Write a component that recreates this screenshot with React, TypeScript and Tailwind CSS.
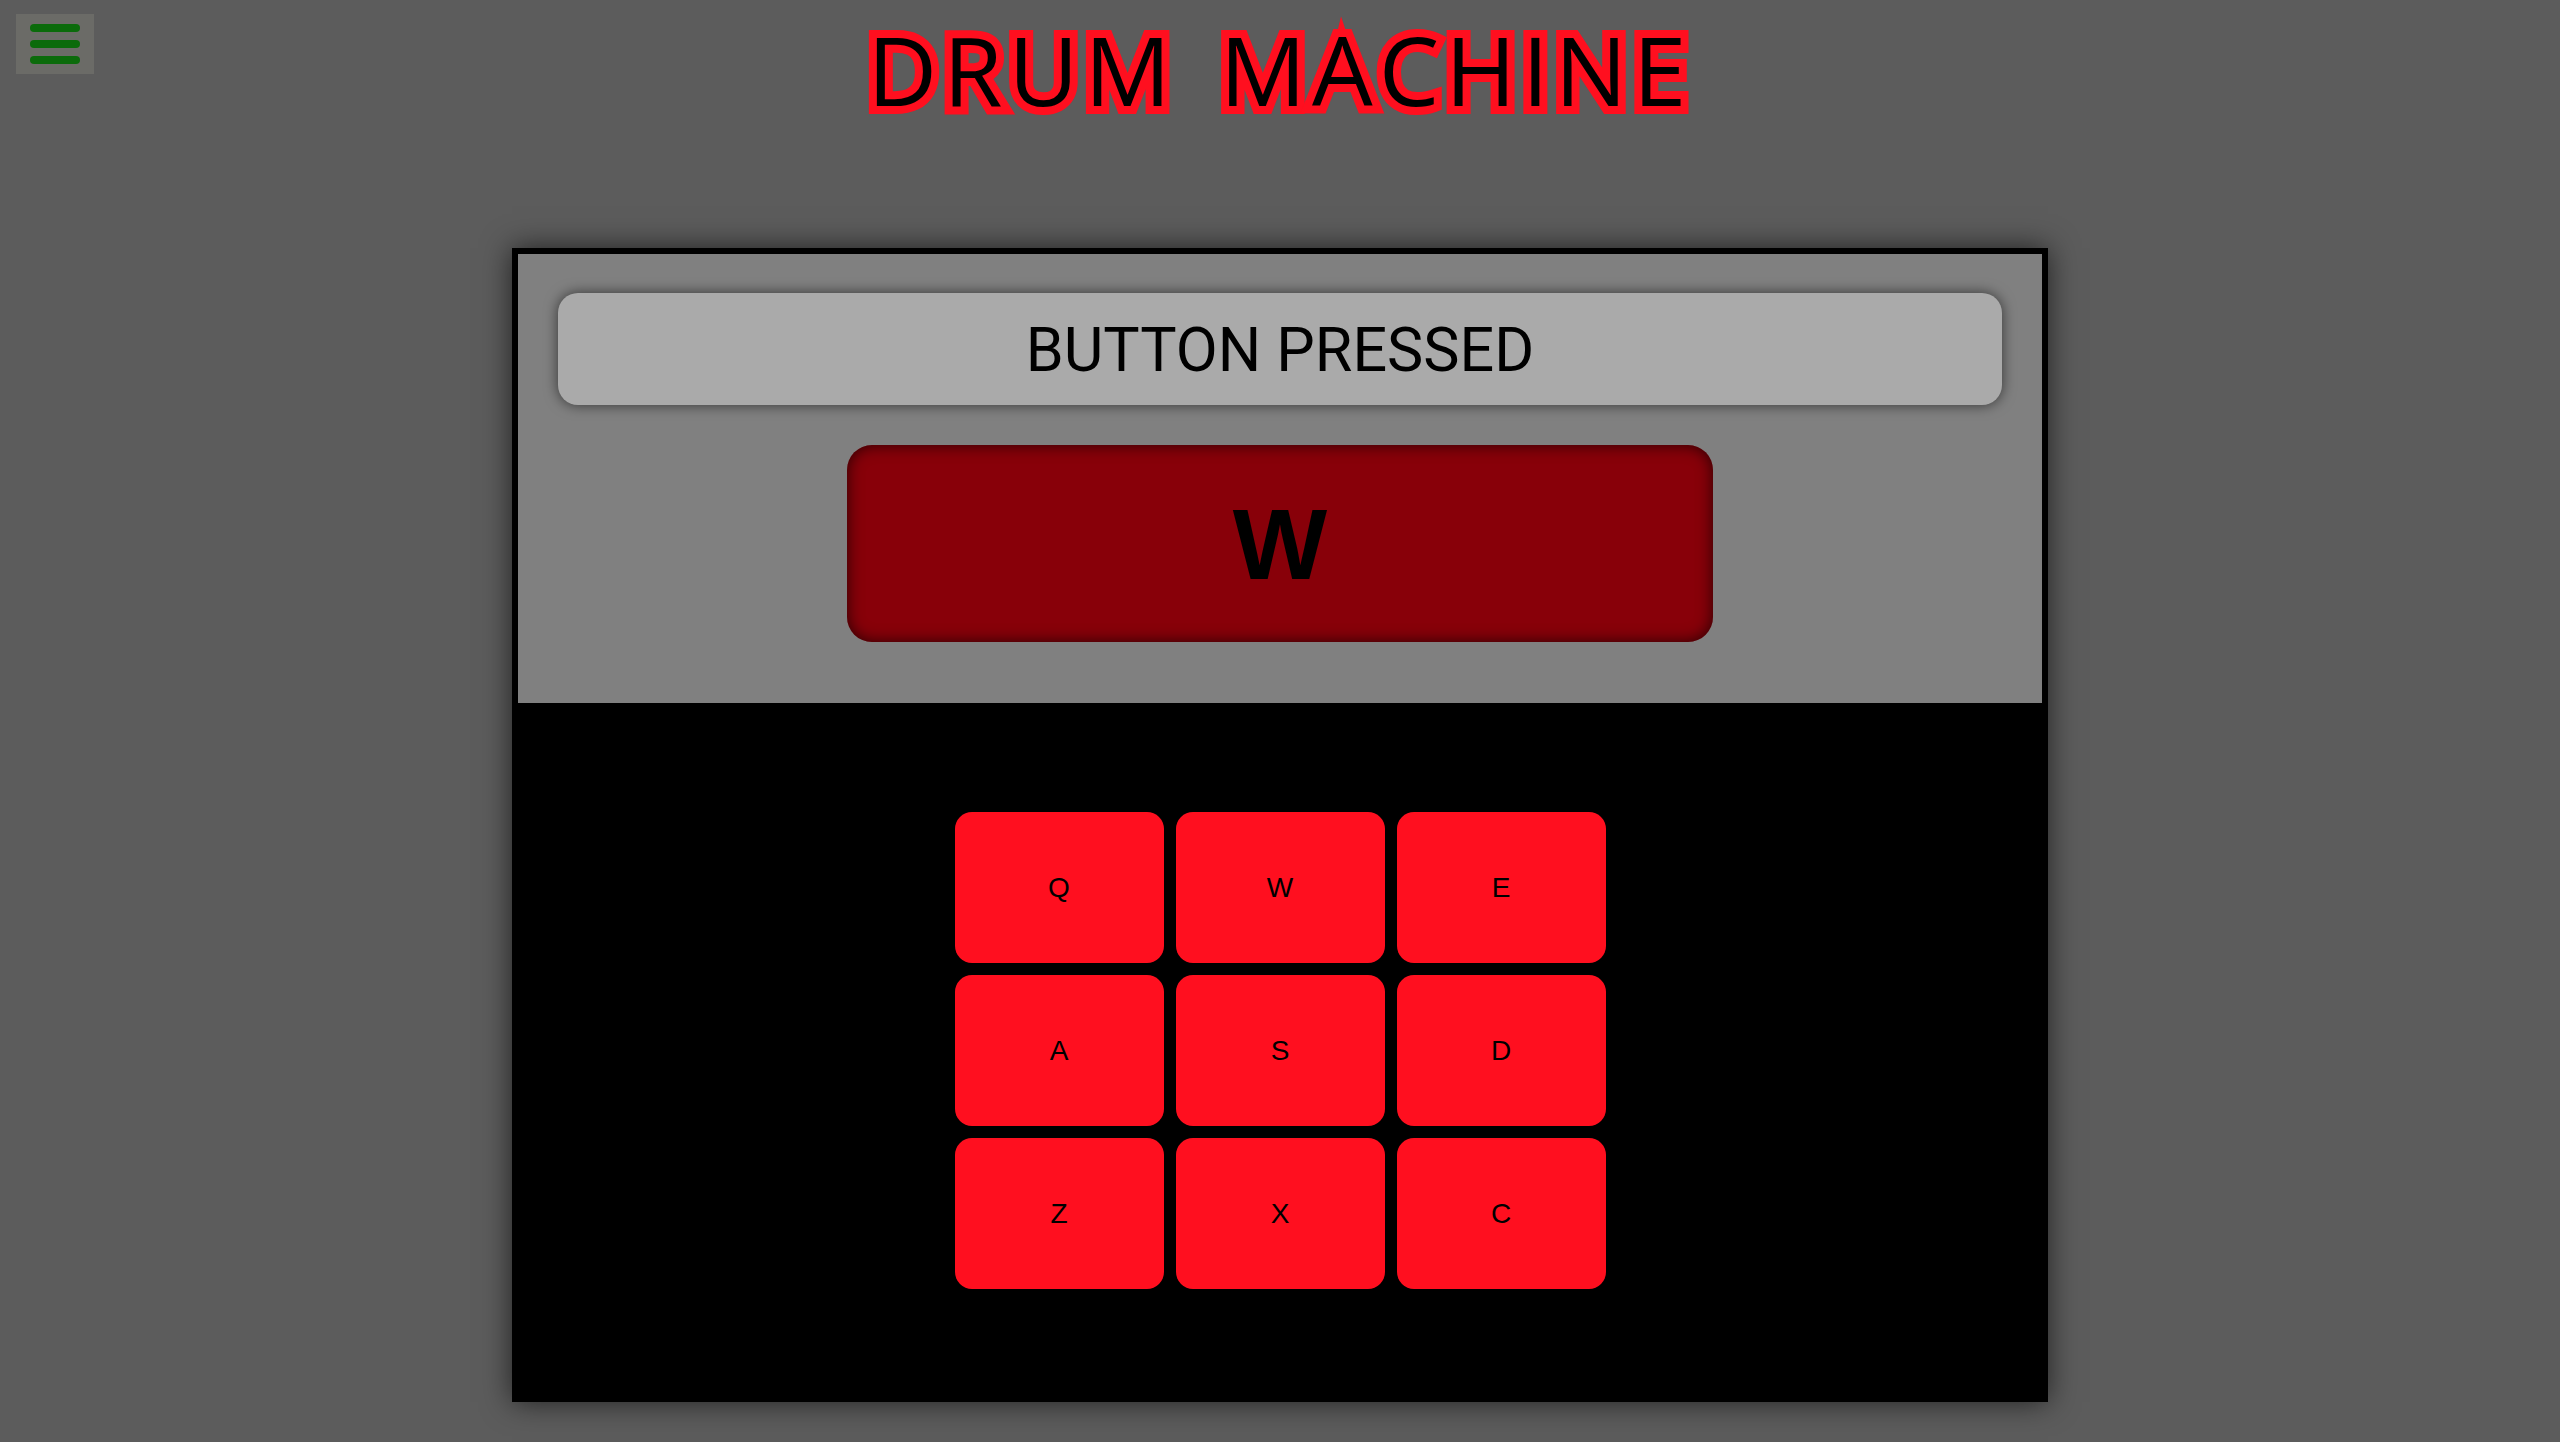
export default function App() {
  const keys = ["Q", "W", "E", "A", "S", "D", "Z", "X", "C"];
  return (
    <div className="relative flex min-h-[1442px] flex-col items-center bg-[#5c5c5c] [font-family:'Liberation_Sans',Arial,sans-serif]">
      <button className="absolute left-[16px] top-[14px] flex h-[60px] w-[78px] flex-col items-center justify-center gap-[8px] bg-[#6b6b67]">
        <span className="block h-[8px] w-[50px] rounded-full bg-[#0b6b0b]" />
        <span className="block h-[8px] w-[50px] rounded-full bg-[#0b6b0b]" />
        <span className="block h-[8px] w-[50px] rounded-full bg-[#0b6b0b]" />
      </button>
      <h1 className="mt-[21px] h-[96px] text-[96px] leading-none tracking-[6px] [word-spacing:12px] text-black [font-family:'Open_Sans',sans-serif] [-webkit-text-stroke:16px_#ff0f1f] [paint-order:stroke_fill]">
        DRUM MACHINE
      </h1>
      <div className="mt-[131px] w-[1536px] border-[6px] border-black bg-black shadow-[0_0_28px_rgba(0,0,0,0.65)]">
        <div className="flex flex-col items-center gap-[40px] bg-[#808080] px-[40px] pb-[61px] pt-[39px]">
          <div className="flex h-[112px] w-full items-center justify-center rounded-[20px] bg-[#aaaaaa] pt-[4px] text-[61px] text-black shadow-[0_0_14px_rgba(0,0,0,0.6)] [font-family:Roboto,sans-serif]">
            BUTTON PRESSED
          </div>
          <div className="flex h-[197px] w-[866px] items-center justify-center rounded-[25px] bg-[#880009] text-[100px] font-bold text-black shadow-[inset_0_0_16px_rgba(0,0,0,0.7)]">
            W
          </div>
        </div>
        <div className="flex h-[693px] items-center justify-center pt-[2px]">
          <div className="grid grid-cols-[repeat(3,209px)] grid-rows-[repeat(3,151px)] gap-[12px]">
            {keys.map((k) => (
              <div
                key={k}
                className="flex items-center justify-center rounded-[17px] bg-[#ff0f1f] text-[28px] text-black"
              >
                {k}
              </div>
            ))}
          </div>
        </div>
      </div>
    </div>
  );
}
